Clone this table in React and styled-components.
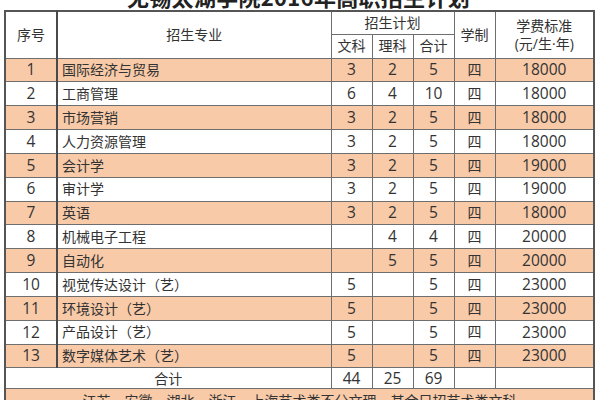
import React from "react";
import styled, { createGlobalStyle } from "styled-components";

const GlobalStyle = createGlobalStyle`
  html, body {
    margin: 0;
    padding: 0;
    background: #ffffff;
    overflow: hidden;
  }
`;

const Page = styled.div`
  width: 600px;
  height: 400px;
  padding-left: 4px;
  box-sizing: border-box;
  font-family: "Noto Sans CJK SC", sans-serif;
  color: #333333;
  overflow: hidden;
`;

const Title = styled.h1`
  margin: -15px 0 3px;
  width: 589px;
  height: 22px;
  line-height: 22px;
  font-size: 22px;
  font-weight: 700;
  text-align: center;
  color: #222222;
  letter-spacing: 0.3px;
`;

const Table = styled.table`
  width: 589px;
  table-layout: fixed;
  border-collapse: collapse;
  border: 2px solid #555555;
  font-size: 14px;
`;

const Row = styled.tr`
  height: ${(p) => p.$h || "23.85px"};
  background: ${(p) => (p.$alt ? "#f8caa8" : "#ffffff")};
`;

const Cell = styled.td`
  border: 1px solid #6e6e6e;
  border-left: ${(p) => (p.$strong ? "2px solid #4a4a4a" : "1px solid #6e6e6e")};
  padding: 0 ${(p) => (p.$left ? "4px" : "0")};
  text-align: ${(p) => (p.$left ? "left" : "center")};
  vertical-align: middle;
  line-height: 1.25;
  white-space: nowrap;
  overflow: hidden;
`;

const Num = styled.span`
  font-family: "Open Sans", "Noto Sans CJK SC", sans-serif;
  font-size: 15.5px;
`;

const Unit = styled.span`
  font-family: "Open Sans", "Noto Sans CJK SC", sans-serif;
  font-size: 14px;
`;

const rows = [
  ["1", "国际经济与贸易", "3", "2", "5", "18000"],
  ["2", "工商管理", "6", "4", "10", "18000"],
  ["3", "市场营销", "3", "2", "5", "18000"],
  ["4", "人力资源管理", "3", "2", "5", "18000"],
  ["5", "会计学", "3", "2", "5", "19000"],
  ["6", "审计学", "3", "2", "5", "19000"],
  ["7", "英语", "3", "2", "5", "18000"],
  ["8", "机械电子工程", "", "4", "4", "20000"],
  ["9", "自动化", "", "5", "5", "20000"],
  ["10", "视觉传达设计（艺）", "5", "", "5", "23000"],
  ["11", "环境设计（艺）", "5", "", "5", "23000"],
  ["12", "产品设计（艺）", "5", "", "5", "23000"],
  ["13", "数字媒体艺术（艺）", "5", "", "5", "23000"],
];

const App = () => {
  return (
    <Page>
      <GlobalStyle />
      <Title>无锡太湖学院2016年高职招生计划</Title>
      <Table>
        <colgroup>
          <col style={{ width: 52 }} />
          <col style={{ width: 274 }} />
          <col style={{ width: 41 }} />
          <col style={{ width: 41 }} />
          <col style={{ width: 41 }} />
          <col style={{ width: 41 }} />
          <col style={{ width: 99 }} />
        </colgroup>
        <thead>
          <Row $h="23px">
            <Cell rowSpan={2}>序号</Cell>
            <Cell rowSpan={2} $strong>
              招生专业
            </Cell>
            <Cell colSpan={3}>招生计划</Cell>
            <Cell rowSpan={2}>学制</Cell>
            <Cell rowSpan={2}>
              学费标准
              <br />
              <Unit>(元/生·年)</Unit>
            </Cell>
          </Row>
          <Row $h="24px">
            <Cell>文科</Cell>
            <Cell>理科</Cell>
            <Cell>合计</Cell>
          </Row>
        </thead>
        <tbody>
          {rows.map(([no, name, wen, li, total, fee], i) => (
            <Row key={no} $alt={i % 2 === 0}>
              <Cell>
                <Num>{no}</Num>
              </Cell>
              <Cell $left $strong>
                {name}
              </Cell>
              <Cell>
                <Num>{wen}</Num>
              </Cell>
              <Cell>
                <Num>{li}</Num>
              </Cell>
              <Cell>
                <Num>{total}</Num>
              </Cell>
              <Cell>四</Cell>
              <Cell>
                <Num>{fee}</Num>
              </Cell>
            </Row>
          ))}
          <Row $h="21px">
            <Cell colSpan={2}>合计</Cell>
            <Cell>
              <Num>44</Num>
            </Cell>
            <Cell>
              <Num>25</Num>
            </Cell>
            <Cell>
              <Num>69</Num>
            </Cell>
            <Cell />
            <Cell />
          </Row>
          <Row $h="24px" $alt>
            <Cell colSpan={7}>
              江苏、安徽、湖北、浙江、上海艺术类不分文理，其余只招艺术类文科
            </Cell>
          </Row>
        </tbody>
      </Table>
    </Page>
  );
};

export default App;
